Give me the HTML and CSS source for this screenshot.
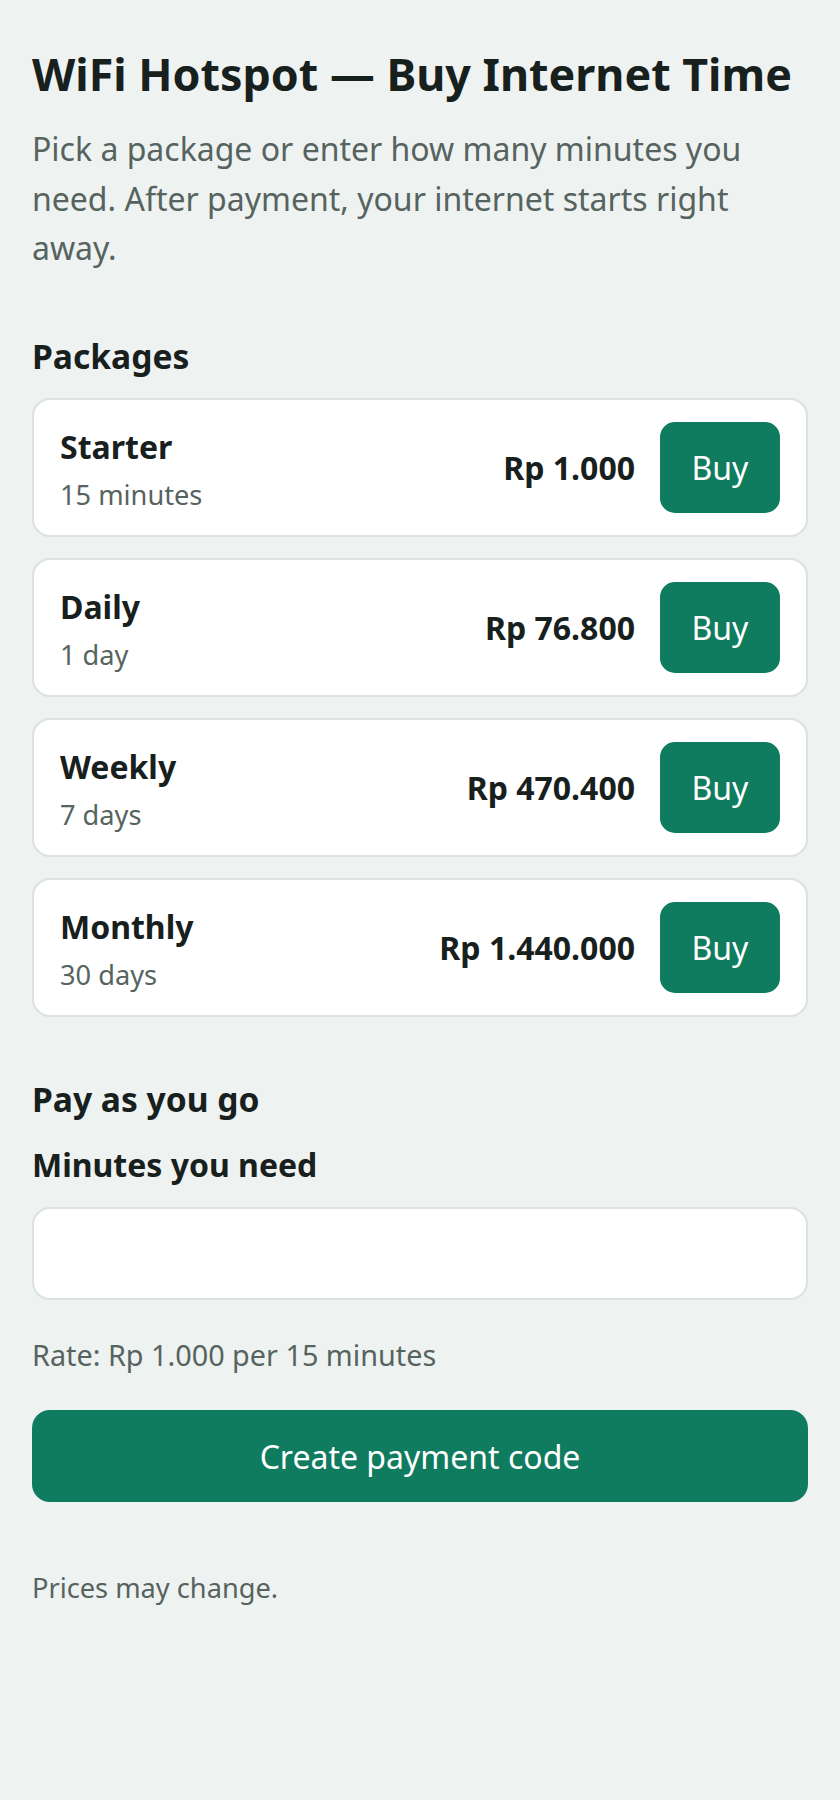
FILE: index.html
```html
<!DOCTYPE html>
<html lang="en">
<head>
    <meta charset="UTF-8">
    <meta name="viewport" content="width=device-width, initial-scale=1.0">
    <title>WiFi Hotspot</title>
    <link rel="stylesheet" href="styles.css">
</head>
<body>

<div class="page">
    <h1>WiFi Hotspot — Buy Internet Time</h1>
    <p class="lead">Pick a package or enter how many minutes you need. After payment, your internet starts right away.</p>

    <!-- Packages -->
    <h2>Packages</h2>
    <div class="package-list">
        <div class="package">
            <div class="package-info">
                <div class="package-name">Starter</div>
                <div class="package-length">15 minutes</div>
            </div>
            <div class="package-price">Rp 1.000</div>
            <button class="buy-button">Buy</button>
        </div>
        <div class="package">
            <div class="package-info">
                <div class="package-name">Daily</div>
                <div class="package-length">1 day</div>
            </div>
            <div class="package-price">Rp 76.800</div>
            <button class="buy-button">Buy</button>
        </div>
        <div class="package">
            <div class="package-info">
                <div class="package-name">Weekly</div>
                <div class="package-length">7 days</div>
            </div>
            <div class="package-price">Rp 470.400</div>
            <button class="buy-button">Buy</button>
        </div>
        <div class="package">
            <div class="package-info">
                <div class="package-name">Monthly</div>
                <div class="package-length">30 days</div>
            </div>
            <div class="package-price">Rp 1.440.000</div>
            <button class="buy-button">Buy</button>
        </div>
    </div>

    <!-- Pay as you go -->
    <h2 class="payg-title">Pay as you go</h2>
    <form class="payg-form">
        <label for="minutes">Minutes you need</label>
        <input type="number" id="minutes" name="minutes">
        <p class="rate">Rate: Rp 1.000 per 15 minutes</p>
        <button type="button" class="create-button">Create payment code</button>
    </form>

    <p class="note">Prices may change.</p>
</div>

</body>
</html>
```

FILE: styles.css
```css
body {
    font-family: "Noto Sans", sans-serif;
    margin: 0;
    background-color: #eef2f1;
    color: #17201d;
}
.page {
    padding: 32px;
}
h1 {
    font-size: 44.8px;
    line-height: 1.3;
    margin: 13px 0 0;
}
.lead {
    font-size: 32px;
    line-height: 1.55;
    color: #56635f;
    margin: 21px 0 0;
}
h2 {
    font-size: 33.6px;
    line-height: 1.3;
    margin: 62px 0 0;
}
.package-list {
    display: flex;
    flex-direction: column;
    gap: 21px;
    margin-top: 19px;
}
.package {
    display: flex;
    align-items: center;
    gap: 25px;
    padding: 22px 26px;
    background-color: #fff;
    border: 2px solid #dbe2e0;
    border-radius: 18px;
}
.package-info {
    flex: 1;
    padding-top: 6px;
}
.package-name {
    font-size: 32px;
    font-weight: bold;
    line-height: 1.2;
    margin-bottom: 11px;
}
.package-length {
    font-size: 27.2px;
    line-height: 1.3;
    color: #56635f;
}
.package-price {
    font-size: 32px;
    font-weight: bold;
}
.buy-button {
    font-family: inherit;
    font-size: 32px;
    width: 120px;
    height: 91px;
    background-color: #0f7b5f;
    color: #fff;
    border: none;
    border-radius: 15px;
}
.payg-title {
    margin-top: 61px;
}
.payg-form label {
    display: block;
    font-size: 32px;
    font-weight: bold;
    line-height: 1.3;
    margin-top: 23px;
}
.payg-form input {
    display: block;
    width: 100%;
    height: 93px;
    box-sizing: border-box;
    margin-top: 21px;
    font-family: inherit;
    font-size: 30px;
    padding: 0 24px;
    background-color: #fff;
    border: 2px solid #dbe2e0;
    border-radius: 18px;
}
.rate {
    font-size: 28.8px;
    line-height: 1.5;
    color: #56635f;
    margin: 33px 0 0;
}
.create-button {
    display: block;
    width: 100%;
    height: 92px;
    margin-top: 34px;
    font-family: inherit;
    font-size: 32px;
    background-color: #0f7b5f;
    color: #fff;
    border: none;
    border-radius: 18px;
}
.note {
    font-size: 27.2px;
    line-height: 1.5;
    color: #56635f;
    margin: 66px 0 0;
}
```
